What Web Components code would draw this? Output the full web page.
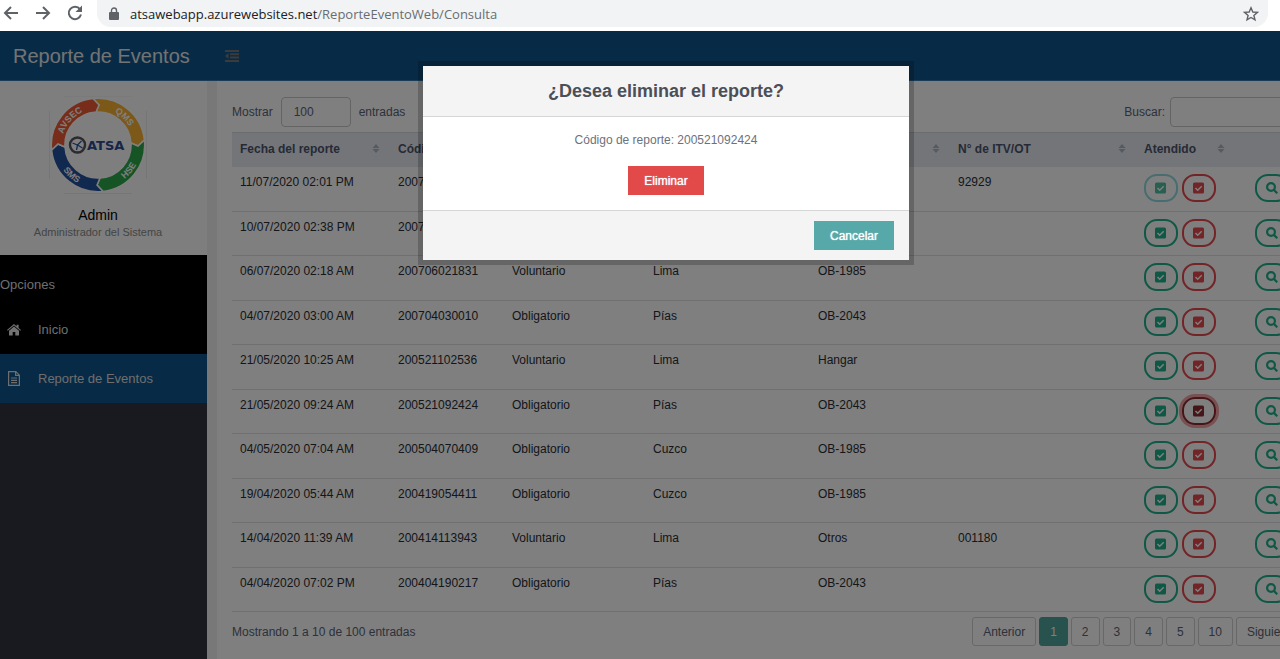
<!DOCTYPE html>
<html lang="es">
<head>
<meta charset="utf-8">
<title>Reporte de Eventos</title>
<style>
  html, body { margin: 0; height: 100%; }
  body { font: 12px/16px "Liberation Sans", Arial, sans-serif; color: #5b6375; overflow: hidden; }
</style>
</head>
<body>
<report-page></report-page>

<script>
const define = (name, html, setup) => {
  const tpl = document.createElement('template');
  tpl.innerHTML = html;
  customElements.define(name, class extends HTMLElement {
    constructor() {
      super();
      this.attachShadow({ mode: 'open' }).append(tpl.content.cloneNode(true));
    }
    connectedCallback() { if (setup) setup(this, this.shadowRoot); }
  });
};

/* ---------- browser bar ---------- */
define('browser-bar', `
<style>
  :host { display: flex; align-items: flex-start; height: 31px; background: #fff; color: #5f6368; }
  nav { display: flex; gap: 14px; padding: 4px 13px 0 2px; }
  button { all: unset; display: flex; }
  nav svg { width: 18px; height: 18px; }
  .box { flex: 1; display: flex; align-items: center; gap: 11px; height: 27px; margin-right: 12px; padding: 0 9px 0 12px;
         background: #f1f3f4; border-radius: 0 0 14px 14px; box-sizing: border-box; }
  .url { flex: 1; font: 13px/20px "Open Sans", "Noto Sans", sans-serif; color: #696d72; }
  .url b { font-weight: 400; color: #202124; }
</style>
<nav>
  <button aria-label="Atrás"><svg viewBox="0 0 18 18" fill="none" stroke="#5f6368" stroke-width="2"><path d="M16 9H3M9 3L3 9l6 6"/></svg></button>
  <button aria-label="Adelante"><svg viewBox="0 0 18 18" fill="none" stroke="#5f6368" stroke-width="2"><path d="M2 9h13M9 3l6 6-6 6"/></svg></button>
  <button aria-label="Recargar"><svg viewBox="0 0 18 18" fill="none" stroke="#5f6368" stroke-width="2"><path d="M14 5.2A6.2 6.2 0 1 0 15 10.6"/><path d="M16 1.5V8H9.5z" fill="#5f6368" stroke="none"/></svg></button>
</nav>
<div class="box">
  <svg width="10" height="14" viewBox="0 0 10 14"><rect y="5" width="10" height="8" rx="1" fill="#5f6368"/><path d="M2.5 5V3.5a2.5 2.5 0 0 1 5 0V5" fill="none" stroke="#5f6368" stroke-width="1.4"/></svg>
  <span class="url"><b>atsawebapp.azurewebsites.net</b>/ReporteEventoWeb/Consulta</span>
  <button aria-label="Marcador"><svg width="16" height="16" viewBox="0 0 16 16"><path d="M8 1.8l1.8 4.2 4.6.4-3.5 3 1.1 4.5L8 11.500l-4 2.400 1.100-4.500-3.500-3 4.600-.4z" fill="none" stroke="#5f6368" stroke-width="1.4"/></svg></button>
</div>`);

/* ---------- top header ---------- */
define('app-header', `
<style>
  :host { display: flex; align-items: center; gap: 35px; height: 50px; box-sizing: border-box; padding-left: 13px;
          background: #0e568e; border-bottom: 1px solid #3578ac; }
  h1 { margin: 0; font: 400 20px/24px "Liberation Sans", Arial, sans-serif; color: #e6e6e6; }
  button { all: unset; display: flex; }
</style>
<h1><slot></slot></h1>
<button aria-label="Contraer menú"><svg width="14" height="12" viewBox="0 0 14 12" fill="#767676"><path d="M0 0h14v2H0zM5 3.300h9v2H5zM5 6.600h9v2H5zM0 10h14v2H0zM3.500 3v6L0 6z"/></svg></button>`);

/* ---------- company logo ---------- */
define('atsa-logo', `
<style>:host { display: block; width: 98px; height: 98px; } svg { display: block; }</style>
<svg width="98" height="98" viewBox="-49 -49 98 98" font-family="Liberation Sans, Arial, sans-serif" font-weight="700" role="img" aria-label="ATSA">
  <defs>
    <path id="cw" d="M-36.500 0A36.500 36.500 0 0 1 36.500 0"/>
    <path id="ccw" d="M-43 0A43 43 0 0 0 43 0"/>
  </defs>
  <path d="M-34-49H34M-34 48.500H34M-48.500-34V34M48.500-34V34" stroke="#ececec" fill="none"/>
  <g stroke="#fff" stroke-width="1.500">
    <path fill="#f8b133" d="M-5-46.400A46.700 46.700 0 0 1 46.400-5L40 1 33-2A33 33 0 0 0-2-33L1-40Z"/>
    <path fill="#2fa84a" transform="rotate(90)" d="M-5-46.400A46.700 46.700 0 0 1 46.400-5L40 1 33-2A33 33 0 0 0-2-33L1-40Z"/>
    <path fill="#25539f" transform="rotate(180)" d="M-5-46.400A46.700 46.700 0 0 1 46.400-5L40 1 33-2A33 33 0 0 0-2-33L1-40Z"/>
    <path fill="#ee5a32" transform="rotate(270)" d="M-5-46.400A46.700 46.700 0 0 1 46.400-5L40 1 33-2A33 33 0 0 0-2-33L1-40Z"/>
  </g>
  <g fill="#fff" font-size="9" text-anchor="middle">
    <text><textPath href="#cw" startOffset="23%">AVSEC</textPath></text>
    <text><textPath href="#cw" startOffset="74%">QMS</textPath></text>
    <text><textPath href="#ccw" startOffset="27%">SMS</textPath></text>
    <text><textPath href="#ccw" startOffset="78%">HSE</textPath></text>
  </g>
  <circle cx="-20.500" r="7.500" fill="#fff" stroke="#55555f" stroke-width="2.400"/>
  <path d="M-25.500-2l5 2 4-4M-20.500 0l-1 5M-20.500 0l5 3" stroke="#25539f" stroke-width="1.300" fill="none"/>
  <text x="-11" y="5" font-family="DejaVu Sans, sans-serif" font-size="13" fill="#2b4c93">ATSA</text>
</svg>`);

/* ---------- sidebar ---------- */
define('side-item', `
<style>
  :host { display: block; height: 49px; background: #000; }
  :host([active]) { background: #0e568e; }
  a { display: flex; align-items: center; height: 100%; padding-left: 7px; color: #dcdcdc; text-decoration: none; font-size: 13px; }
  .ico { display: flex; width: 31px; }
</style>
<a href="#"><span class="ico"><slot name="icon"></slot></span><slot></slot></a>`);

define('side-bar', `
<style>
  :host { display: flex; flex-direction: column; flex: none; width: 207px; background: #32353e; }
  .profile { display: flex; flex-direction: column; align-items: center; height: 174px; box-sizing: border-box; padding: 15px 11px 0 0; background: #fdfdfd; }
  .name { margin-top: 13px; font-size: 14px; line-height: 16px; color: #000; }
  .role { font-size: 11px; line-height: 18px; color: #8a8a8a; }
  .cap { height: 50px; box-sizing: border-box; padding-top: 22px; background: #000; color: #dcdcdc; font-size: 13px; }
</style>
<div class="profile">
  <atsa-logo></atsa-logo>
  <div class="name">Admin</div>
  <div class="role">Administrador del Sistema</div>
</div>
<nav>
  <div class="cap">Opciones</div>
  <side-item>
    <svg slot="icon" width="14" height="12" viewBox="0 0 14 12" fill="#e4e4e4"><path d="M7 2.500l5 4.200V11a.6.6 0 0 1-.6.600H8.300V8H5.700v3.600H2.600A.6.6 0 0 1 2 11V6.700z"/><path d="M7 0l2.600 2.200V.7h2v3.200L14 5.900l-.7.900L7 1.600.7 6.800 0 5.900z"/></svg>
    Inicio
  </side-item>
  <side-item active>
    <svg slot="icon" width="14" height="15" viewBox="0 0 14 15" fill="none" stroke="#dcdcdc" stroke-width="1.200"><path d="M1.600.6h7.200l3.600 3.600v10.200H1.600zM8.600.6v3.800h3.800M4 7h6M4 9.300h6M4 11.600h6"/></svg>
    Reporte de Eventos
  </side-item>
</nav>`);

/* ---------- round action button ---------- */
define('action-button', `
<style>
  :host { display: inline-flex; --c: #1fb18a; }
  :host([kind=danger]) { --c: #e5484c; }
  :host([disabled]) { --c: #8fdae0; --i: #4fc0a0; }
  :host([pressed]) { --c: #8c2a30; }
  button { display: flex; align-items: center; justify-content: center; width: 34px; height: 28px; padding: 0; box-sizing: border-box;
           border: 2px solid var(--c); border-radius: 13px; background: none; color: var(--i, var(--c)); }
  :host([pressed]) button { box-shadow: 0 0 0 3px rgba(229, 72, 76, .5); }
</style>
<button></button>`, (el, root) => {
  const icons = {
    check: '<svg width="12" height="12" viewBox="0 0 12 12"><rect width="11" height="11" y=".5" rx="1.500" fill="currentColor"/><path d="M2.500 6l2.200 2.200 4-4" fill="none" stroke="#fff" stroke-width="1.500"/></svg>',
    search: '<svg width="12" height="12" viewBox="0 0 12 12" fill="none" stroke="currentColor" stroke-width="2.200"><circle cx="5" cy="5" r="3.900"/><path d="M7.900 7.900l3.400 3.400"/></svg>'
  };
  const b = root.querySelector('button');
  b.innerHTML = icons[el.getAttribute('icon')];
  b.setAttribute('aria-label', el.getAttribute('label'));
  b.disabled = el.hasAttribute('disabled');
});

/* ---------- data table ---------- */
define('report-table', `
<style>
  :host { display: block; }
  table { width: 100%; table-layout: fixed; border-collapse: separate; border-spacing: 0; }
  th { height: 35px; box-sizing: border-box; padding: 0 8px 3px; text-align: left; background: #e6ebf3; border-top: 1px solid #d5dae0; color: #4c556c; font-weight: 700; }
  th div { display: flex; align-items: center; justify-content: space-between; padding-right: 2px; }
  td { height: 44px; box-sizing: border-box; padding: 7px 8px 0; vertical-align: top; border-bottom: 1px solid #e0e0e0; color: #2a2d33; white-space: nowrap; }
  tr:nth-child(odd) td { height: 45px; }
  .acts { display: flex; gap: 4px; }
  td:last-child .acts { justify-content: center; }
</style>
<table>
  <colgroup><col style="width:158px"><col style="width:114px"><col style="width:141px"><col style="width:165px"><col style="width:140px"><col style="width:186px"><col style="width:99px"><col></colgroup>
  <thead><tr></tr></thead><tbody></tbody>
</table>`, (el, root) => {
  const heads = ['Fecha del reporte', 'Códi', '', '', '', 'N° de ITV/OT', 'Atendido'];
  const sort = '<svg width="8" height="9" viewBox="0 0 8 9" fill="#aeb4c2"><path d="M4 0l3.500 4h-7zM4 9L.5 5h7z"/></svg>';
  root.querySelector('thead tr').innerHTML = heads.map(h => `<th><div><span>${h}</span>${sort}</div></th>`).join('') + '<th></th>';
  const rows = [
    ['11/07/2020 02:01 PM', '2007', '', '', '', '92929'],
    ['10/07/2020 02:38 PM', '2007', '', '', '', ''],
    ['06/07/2020 02:18 AM', '200706021831', 'Voluntario', 'Lima', 'OB-1985', ''],
    ['04/07/2020 03:00 AM', '200704030010', 'Obligatorio', 'Pías', 'OB-2043', ''],
    ['21/05/2020 10:25 AM', '200521102536', 'Voluntario', 'Lima', 'Hangar', ''],
    ['21/05/2020 09:24 AM', '200521092424', 'Obligatorio', 'Pías', 'OB-2043', ''],
    ['04/05/2020 07:04 AM', '200504070409', 'Obligatorio', 'Cuzco', 'OB-1985', ''],
    ['19/04/2020 05:44 AM', '200419054411', 'Obligatorio', 'Cuzco', 'OB-1985', ''],
    ['14/04/2020 11:39 AM', '200414113943', 'Voluntario', 'Lima', 'Otros', '001180'],
    ['04/04/2020 07:02 PM', '200404190217', 'Obligatorio', 'Pías', 'OB-2043', '']
  ];
  root.querySelector('tbody').innerHTML = rows.map((r, i) => `<tr>${r.map(c => `<td>${c}</td>`).join('')}
    <td><div class="acts"><action-button icon="check" label="Atender" ${i === 0 ? 'disabled' : ''}></action-button><action-button icon="check" kind="danger" label="Eliminar" ${i === 5 ? 'pressed' : ''}></action-button></div></td>
    <td><div class="acts"><action-button icon="search" label="Ver"></action-button></div></td></tr>`).join('');
});

/* ---------- pager ---------- */
define('table-pager', `
<style>
  :host { display: flex; gap: 3px; }
  button { height: 29px; box-sizing: border-box; padding: 0 10px; border: 1px solid #d0d0d0; border-radius: 3px; background: none; color: #5b6375; font: inherit; }
  button[aria-current] { background: #4fa59c; border-color: #4fa59c; color: #fff; }
</style>
<button>Anterior</button><button aria-current="page">1</button><button>2</button><button>3</button><button>4</button><button>5</button><button>10</button><button>Siguiente</button>`);

/* ---------- main panel ---------- */
define('report-panel', `
<style>
  :host { display: block; flex: 1; min-width: 0; margin: 0 10px; padding: 16px 14px 14px 15px; background: #fff; box-sizing: border-box; }
  .bar { display: flex; justify-content: space-between; align-items: center; }
  .tools { padding-bottom: 5px; }
  .foot { padding-top: 5px; }
  label { display: flex; align-items: center; gap: 8px; }
  .find { gap: 5px; }
  select, input { height: 30px; box-sizing: border-box; border: 1px solid #c9c9c9; border-radius: 4px; background: #fff; color: #5b6375; font: inherit; padding: 0 12px; margin: 0; }
  select { appearance: none; width: 70px; }
  input { width: 138px; }
</style>
<div class="bar tools">
  <label>Mostrar <select><option>100</option></select> entradas</label>
  <label class="find">Buscar: <input type="search"></label>
</div>
<report-table></report-table>
<div class="bar foot"><span>Mostrando 1 a 10 de 100 entradas</span><table-pager></table-pager></div>`);

/* ---------- confirmation dialog ---------- */
define('confirm-dialog', `
<style>
  :host { display: block; position: absolute; inset: 0; background: rgba(0, 0, 0, .5); }
  section { width: 486px; margin: 35px auto 0; background: #fff; box-shadow: 0 0 0 5px rgba(0, 0, 0, .2); text-align: center; color: #6c727c; }
  h2 { margin: 0; padding: 13px 0; font-size: 18px; line-height: 24px; color: #4b4f57; background: #f4f4f4; border-bottom: 1px solid #d6d6d6; }
  .body { padding: 15px; }
  p { margin: 0 0 18px; }
  footer { display: flex; justify-content: flex-end; padding: 10px 15px; background: #f4f4f4; border-top: 1px solid #d6d6d6; }
  button { height: 29px; padding: 0 16px; border: 0; color: #fff; font: inherit; text-shadow: 0 0 1px #fff; }
  .del { background: #e24a4a; }
  .cancel { background: #56a9a8; }
</style>
<section role="dialog" aria-labelledby="t">
  <h2 id="t"><slot name="title"></slot></h2>
  <div class="body"><p><slot></slot></p><button class="del">Eliminar</button></div>
  <footer><button class="cancel">Cancelar</button></footer>
</section>`);

/* ---------- page ---------- */
define('report-page', `
<style>
  :host { display: flex; flex-direction: column; min-height: 100%; overflow: hidden; }
  .stage { position: relative; flex: 1; display: flex; flex-direction: column; min-width: 1332px; background: #f1f1f1; }
  .cols { flex: 1; display: flex; }
</style>
<browser-bar></browser-bar>
<div class="stage">
  <app-header>Reporte de Eventos</app-header>
  <div class="cols"><side-bar></side-bar><report-panel></report-panel></div>
  <confirm-dialog><span slot="title">¿Desea eliminar el reporte?</span>Código de reporte: 200521092424</confirm-dialog>
</div>`);
</script>
</body>
</html>
